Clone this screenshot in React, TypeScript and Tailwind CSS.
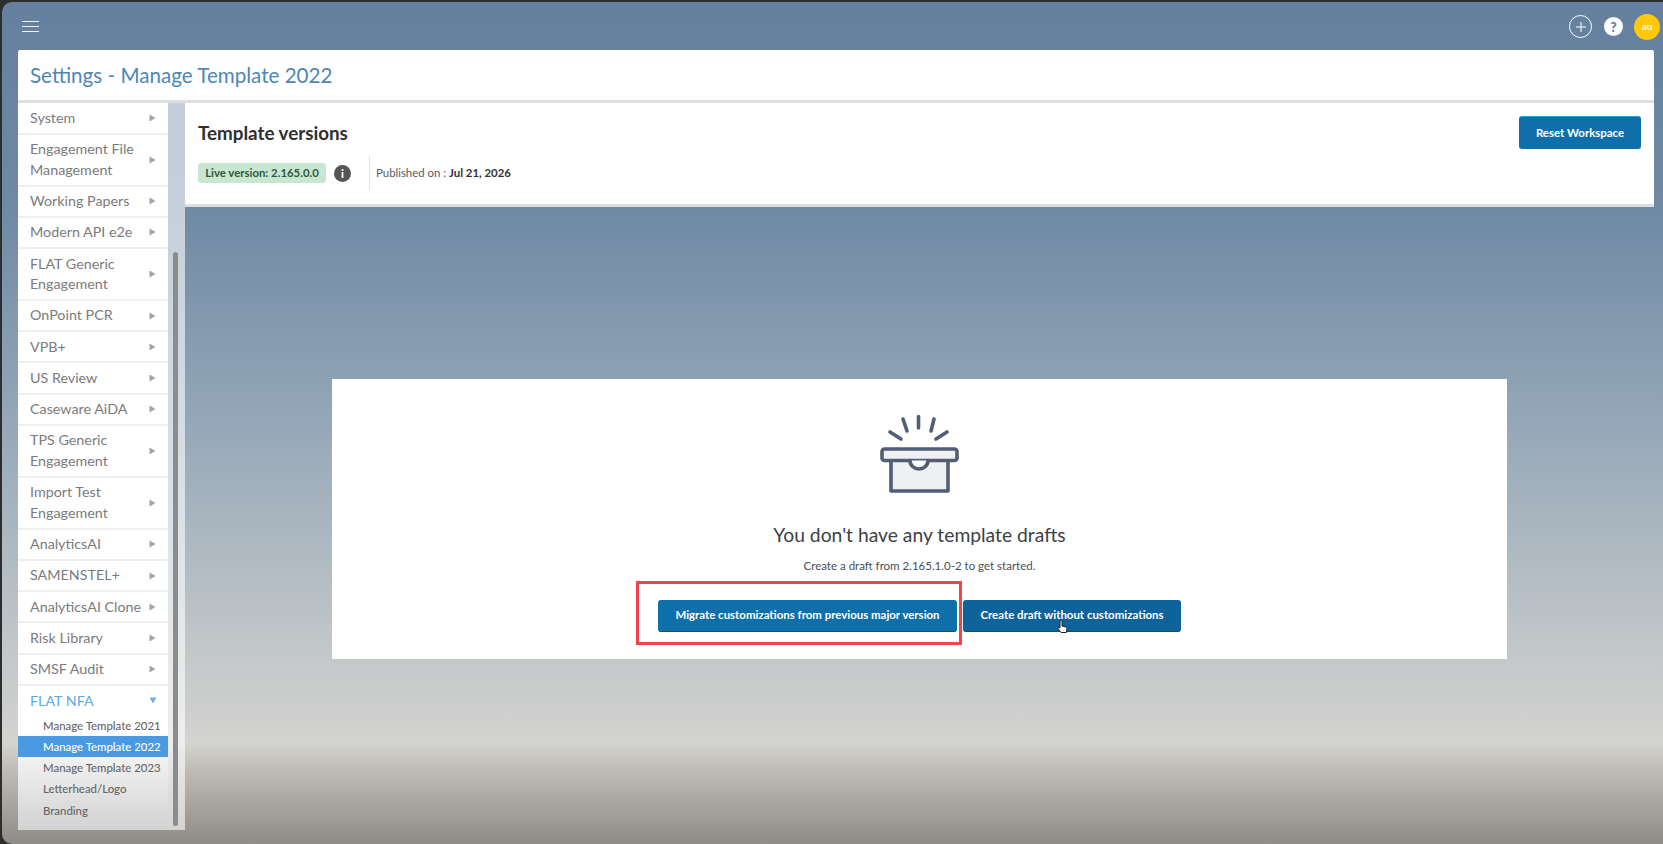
import React from 'react';
import { Plus } from 'lucide-react';

const items = [
  { label: 'System' },
  { label: 'Engagement File Management', tall: true },
  { label: 'Working Papers' },
  { label: 'Modern API e2e' },
  { label: 'FLAT Generic Engagement', tall: true },
  { label: 'OnPoint PCR' },
  { label: 'VPB+' },
  { label: 'US Review' },
  { label: 'Caseware AiDA' },
  { label: 'TPS Generic Engagement', tall: true },
  { label: 'Import Test Engagement', tall: true },
  { label: 'AnalyticsAI' },
  { label: 'SAMENSTEL+' },
  { label: 'AnalyticsAI Clone' },
  { label: 'Risk Library' },
  { label: 'SMSF Audit' },
];

const subItems = ['Manage Template 2021', 'Manage Template 2022', 'Manage Template 2023', 'Letterhead/Logo', 'Branding'];

const Arrow = () => (
  <svg width="7" height="8" viewBox="0 0 7 8" className="shrink-0 mr-[12px]">
    <path d="M0.5 0.5 L6.5 4 L0.5 7.5 Z" fill="#a3a3a3" />
  </svg>
);

const DraftIcon = () => (
  <svg width="80" height="80" viewBox="0 0 80 80" fill="none" stroke="#525d76" strokeWidth="3.6" strokeLinecap="round" strokeLinejoin="round">
    <path d="M38.5 2.5 V14" />
    <path d="M23 5 L27 17" />
    <path d="M54 5 L51 17" />
    <path d="M10 18 L21 25" />
    <path d="M67 18 L56 25" />
    <path d="M11 46.5 V77 H68 V46.5" fill="#eef0f4" />
    <rect x="2" y="35" width="75" height="11.5" rx="2.5" fill="#eef0f4" />
    <path d="M30 46.5 A9 8.5 0 0 0 48 46.5" fill="#ffffff" />
  </svg>
);

const App = () => {
  return (
    <div className="relative w-[1663px] h-[844px] overflow-hidden bg-[#2d2d2d] font-['Lato','Liberation_Sans',sans-serif]">
      <div className="ml-[2px] mt-[2px] w-[1661px] h-[842px] rounded-tl-[10px] rounded-bl-[10px] bg-[linear-gradient(180deg,#64809e_0%,#708aa4_25%,#90a4b6_47%,#c1c6c8_76%,#d3d3d0_88%,#c0bdb7_91%,#aaa6a0_95%,#8e8c88_100%)] pl-[16px] pr-[9px] flex flex-col">
        {/* Top bar */}
        <div className="h-[48px] shrink-0 flex items-center justify-between">
          <div className="flex flex-col gap-[3.5px] ml-[4px] mt-[1px]">
            <div className="w-[17px] h-[1.5px] bg-white/90" />
            <div className="w-[17px] h-[1.5px] bg-white/90" />
            <div className="w-[17px] h-[1.5px] bg-white/90" />
          </div>
          <div className="flex items-center mr-[-6px] mt-[1px]">
            <div className="w-[23px] h-[23px] rounded-full border border-white flex items-center justify-center">
              <Plus className="w-[16px] h-[16px] text-white" strokeWidth={1.5} />
            </div>
            <div className="ml-[12px] w-[19px] h-[19px] rounded-full bg-white flex items-center justify-center text-[14px] leading-none font-black text-[#64809e]">?</div>
            <div className="ml-[11px] w-[26px] h-[26px] rounded-full bg-[#fdc90a] flex items-center justify-center text-[10px] font-bold text-white/90">au</div>
          </div>
        </div>

        {/* Title */}
        <div className="h-[50px] shrink-0 bg-white rounded-t-[2px] flex items-center pl-[12px]">
          <h1 className="text-[20.6px] font-normal text-[#4f86b5]">Settings - Manage Template 2022</h1>
        </div>

        <div className="flex-1 min-h-0 flex border-t-[3px] border-[#dfdfdf]">
          {/* Sidebar */}
          <aside className="w-[150px] shrink-0 h-[727px] pt-[0.5px] bg-[linear-gradient(180deg,#ffffff_0%,#ffffff_86%,#d2d2d2_100%)] flex flex-col">
            {items.map((item) => (
              <div
                key={item.label}
                className={`flex items-center justify-between shrink-0 border-b-2 border-[#efefef] pl-[12px] text-[14.3px] leading-[20.5px] text-[#7b7b7b] ${item.tall ? 'h-[52px]' : 'h-[31.2px]'}`}
              >
                <span className="w-[118px]">{item.label}</span>
                <Arrow />
              </div>
            ))}
            <div className="h-[29px] shrink-0 flex items-center justify-between pl-[12px] text-[14.3px] text-[#62a9e3]">
              <span>FLAT NFA</span>
              <svg width="8" height="7" viewBox="0 0 8 7" className="mr-[11px]">
                <path d="M0.5 0.5 H7.5 L4 6.5 Z" fill="#76aedc" />
              </svg>
            </div>
            {subItems.map((sub, i) => (
              <div
                key={sub}
                className={`h-[21.2px] shrink-0 flex items-center pl-[25px] text-[11.4px] font-medium ${i === 1 ? 'bg-[#4a9ae2] text-white' : 'text-[#666666]'}`}
              >
                {sub}
              </div>
            ))}
          </aside>

          {/* Scroll track */}
          <div className="w-[17px] shrink-0 h-[727px] bg-white/60 pl-[5px]">
            <div className="mt-[149px] w-[5px] h-[574px] rounded-full bg-[#8a8d90]" />
          </div>

          {/* Main */}
          <main className="flex-1 min-w-0 flex flex-col h-[727px]">
            <div className="h-[104px] shrink-0 bg-white border-b-[3px] border-[#dfdfdf] flex justify-between pl-[13px] pr-[13px]">
              <div className="pt-[18px]">
                <h2 className="text-[18.8px] leading-[24px] font-bold text-[#2f2f2f]">Template versions</h2>
                <div className="mt-[11px] flex items-center h-[34px]">
                  <span className="h-[20px] w-[128px] flex items-center justify-center rounded-[3px] bg-[#c9e6d1] text-[11.4px] font-bold text-[#2c5b3d]">Live version: 2.165.0.0</span>
                  <span className="ml-[8px] w-[17px] h-[17px] rounded-full bg-[#555555] flex items-center justify-center text-[11px] leading-none font-black text-white">i</span>
                  <span className="ml-[18px] h-[34px] border-l border-[#e3e3e3]" />
                  <span className="ml-[6px] text-[11.4px] text-[#5a5a5a]">
                    Published on : <strong className="font-bold text-[#333333]">Jul 21, 2026</strong>
                  </span>
                </div>
              </div>
              <button className="mt-[13px] h-[33px] w-[122px] rounded-[3px] bg-[#0f6fab] border-t border-[#2f9edb] text-[11.45px] font-bold text-white">Reset Workspace</button>
            </div>

            <div className="flex-1 flex items-center justify-center">
              <div className="w-[1175px] h-[280px] bg-white flex flex-col items-center pt-[35px]">
                <DraftIcon />
                <h3 className="mt-[28px] text-[19.3px] leading-[26px] font-normal text-[#3c4147]">You don't have any template drafts</h3>
                <p className="mt-[10px] text-[11.5px] leading-[16px] text-[#4a4e55]">Create a draft from 2.165.1.0-2 to get started.</p>
                <div className="mt-[26px] flex gap-[6px]">
                  <div className="relative">
                    <button className="h-[32px] w-[299px] rounded-[3px] bg-[#0f6fab] border-b border-[#0b4f7c] text-[11.45px] font-bold text-white">Migrate customizations from previous major version</button>
                    <span className="absolute left-[-22px] top-[-19px] w-[326px] h-[64px] border-[3px] border-[#f2444a]" />
                  </div>
                  <div className="relative">
                    <button className="h-[32px] w-[218px] rounded-[3px] bg-[#0e639b] border-b border-[#0b4f7c] text-[11.45px] font-bold text-white">Create draft without customizations</button>
                    <svg width="11" height="14" viewBox="0 0 11 14" className="absolute left-[94px] top-[20px]">
                      <path d="M3 1.5 a1 1 0 0 1 2 0 V6 l4 1 q1 .3 1 1.5 L9.3 12.5 H4 L1 8.5 q-.5 -1 .6 -1.2 L3 8 Z" fill="#ffffff" stroke="#222222" strokeWidth="1" strokeLinejoin="round" />
                    </svg>
                  </div>
                </div>
              </div>
            </div>
          </main>
        </div>
      </div>
    </div>
  );
};

export default App;
